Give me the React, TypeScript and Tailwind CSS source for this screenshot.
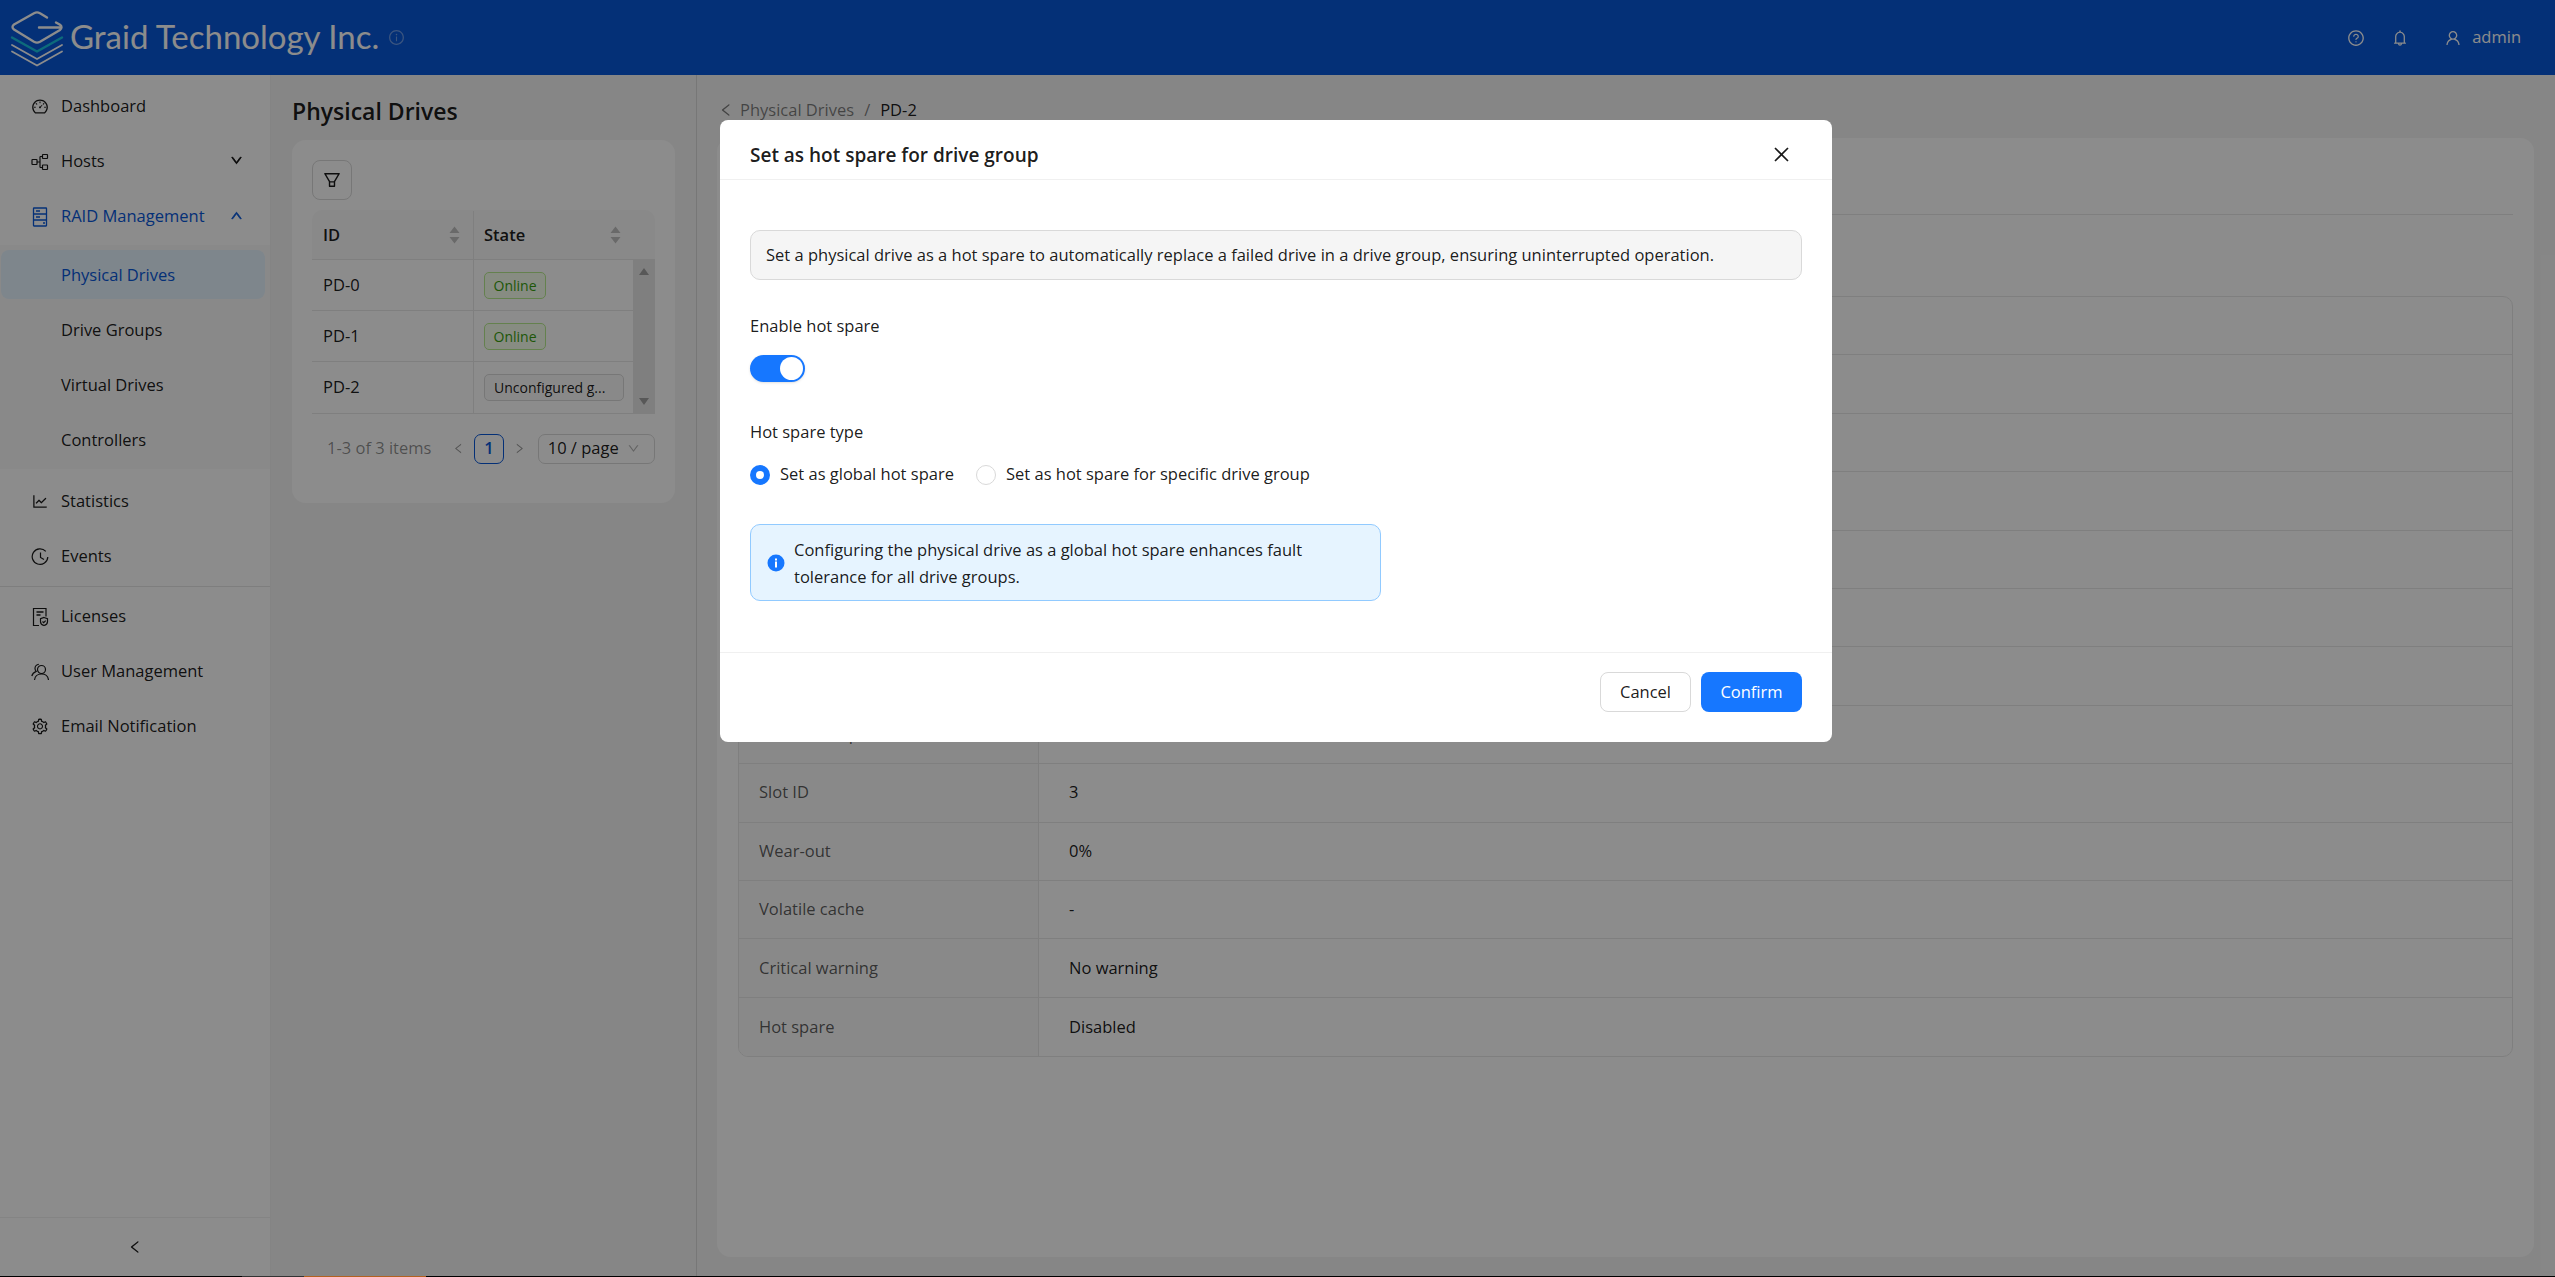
import React from "react";
import {
  AiOutlineDashboard,
  AiOutlineDown,
  AiOutlineUp,
  AiOutlineFilter,
  AiOutlineLeft,
  AiOutlineRight,
  AiOutlineQuestionCircle,
  AiOutlineBell,
  AiOutlineUser,
  AiOutlineClose,
  AiOutlineLineChart,
  AiOutlineSetting,
  AiOutlineInfoCircle,
} from "react-icons/ai";

const HostsIcon = () => (
  <svg width="18" height="18" viewBox="0 0 18 18" fill="none" stroke="currentColor" strokeWidth="1.2">
    <rect x="1" y="6.5" width="5" height="5" rx="0.5" />
    <rect x="11.5" y="1.5" width="5" height="4" rx="0.5" />
    <rect x="11.5" y="12" width="5" height="4.5" rx="0.5" />
    <path d="M6 9h3M9 3.5v11M9 3.5h2.5M9 14.5h2.5" />
  </svg>
);
const RaidIcon = () => (
  <svg width="18" height="20" viewBox="0 0 18 20" fill="none" stroke="currentColor" strokeWidth="1.3">
    <rect x="2.5" y="1" width="13" height="18" rx="0.5" />
    <path d="M2.5 7h13M2.5 13h13M5 4h4M5 10h4M12 16h2" />
  </svg>
);
const EventsIcon = () => (
  <svg width="18" height="18" viewBox="0 0 18 18" fill="none" stroke="currentColor" strokeWidth="1.2">
    <path d="M14.8 3.4A7.8 7.8 0 1 0 16.8 9" />
    <path d="M9.5 4.5V9.5l3.5 2" />
  </svg>
);
const LicenseIcon = () => (
  <svg width="18" height="20" viewBox="0 0 18 20" fill="none" stroke="currentColor" strokeWidth="1.2">
    <path d="M8 18.5H2.5V1.5h12.5v8" />
    <path d="M5.5 5h7M5.5 8h4" strokeWidth="1.4" />
    <path d="M13 10.5l3.5 1.2v3c0 2-1.6 3.2-3.5 3.8-1.9-.6-3.5-1.8-3.5-3.8v-3z" />
    <path d="M11.5 14.5l1.2 1.2 2-2" />
  </svg>
);
const UsersIcon = () => (
  <svg width="18" height="18" viewBox="0 0 18 18" fill="none" stroke="currentColor" strokeWidth="1.2">
    <circle cx="10.5" cy="6.5" r="4" />
    <path d="M3.5 17c.4-3.6 3.2-6 7-6s6.600 2.400 7 6" />
    <path d="M7.800 1.400A4 4 0 0 0 4 5.500c0 1.200.4 2.100 1.200 2.900C3 9.300 1.300 11 .8 13" />
  </svg>
);
const Logo = () => (
  <svg width="54" height="58" viewBox="10 5 54 58" fill="none" strokeLinecap="round" strokeLinejoin="round">
    <path
      d="M47 13.500L40 9.200Q37 7.600 34 9.200L14 20.500Q11 23 14 25.500L34 37.800Q37 39.400 40 37.800L60 26Q63 23 60 20.800L56 18.500M60 23.500L39 23.500"
      stroke="#fff"
      strokeWidth="2.400"
    />
    <path d="M12 33.500L37 47.500L62 33.500" stroke="#19c4e0" strokeWidth="2.400" />
    <path d="M12 41L37 55L62 41" stroke="#fff" strokeWidth="1.800" />
    <path d="M12 47.500L37 61.500L62 47.500" stroke="#fff" strokeWidth="1.800" />
  </svg>
);

const Sort = () => (
  <svg width="11" height="18" viewBox="0 0 11 18" className="text-[#bfbfbf]" fill="currentColor">
    <path d="M5.500 0.500L10.500 7H0.500z" />
    <path d="M5.500 17.500L10.500 11H0.500z" />
  </svg>
);

function NavItem({ icon, label, active, chevron }: { icon: React.ReactNode; label: string; active?: boolean; chevron?: "up" | "down" }) {
  return (
    <div className={`flex h-[55px] items-center pl-[31px] pr-[27px] text-[16.5px] ${active ? "text-[#0958d9]" : "text-black/90"}`}>
      <span className="flex w-[18px] justify-center">{icon}</span>
      <span className="ml-[12px] flex-1">{label}</span>
      {chevron === "down" && <AiOutlineDown size={13} className="mb-[3px] stroke-[60]" />}
      {chevron === "up" && <AiOutlineUp size={13} className="mb-[3px] stroke-[60]" />}
    </div>
  );
}

function SubItem({ label, active }: { label: string; active?: boolean }) {
  return (
    <div className={`ml-px flex h-[49px] w-[264px] items-center rounded-lg pl-[60px] pt-[2px] text-[16.5px] ${active ? "bg-[#e6f4ff] text-[#0958d9]" : "text-black/90"}`}>
      {label}
    </div>
  );
}

function Sidebar() {
  return (
    <aside className="flex w-[271px] shrink-0 flex-col border-r border-[#f0f0f0] bg-white">
      <div className="flex-1 pt-[4px]">
        <NavItem icon={<AiOutlineDashboard size={19} />} label="Dashboard" />
        <NavItem icon={<HostsIcon />} label="Hosts" chevron="down" />
        <NavItem icon={<RaidIcon />} label="RAID Management" active chevron="up" />
        <div className="mt-px flex flex-col gap-[6px] bg-black/[0.02] py-[5px]">
          <SubItem label="Physical Drives" active />
          <SubItem label="Drive Groups" />
          <SubItem label="Virtual Drives" />
          <SubItem label="Controllers" />
        </div>
        <div className="mt-[5px]">
          <NavItem icon={<AiOutlineLineChart size={19} />} label="Statistics" />
          <NavItem icon={<EventsIcon />} label="Events" />
        </div>
        <div className="mb-[2px] mt-[2px] h-px bg-[#e5e5e5]" />
        <NavItem icon={<LicenseIcon />} label="Licenses" />
        <NavItem icon={<UsersIcon />} label="User Management" />
        <NavItem icon={<AiOutlineSetting size={19} />} label="Email Notification" />
      </div>
      <div className="flex h-[59px] items-center justify-center border-t border-[#f0f0f0] text-black/90">
        <AiOutlineLeft size={16} />
      </div>
    </aside>
  );
}

function DriveRow({ id, tag, last }: { id: string; tag: React.ReactNode; last?: boolean }) {
  return (
    <div className={`flex h-[51px] ${last ? "" : "border-b border-[#e8e8e8]"}`}>
      <div className="flex w-[162px] items-center border-r border-[#e8e8e8] pl-[11px]">{id}</div>
      <div className="flex flex-1 items-center pl-[10px]">{tag}</div>
    </div>
  );
}

const OnlineTag = () => (
  <span className="flex h-[27px] w-[62px] items-center justify-center rounded-[5px] border border-[#b7eb8f] bg-[#f6ffed] text-[14px] text-[#389e0d]">
    Online
  </span>
);

function DrivesPanel() {
  return (
    <section className="w-[426px] shrink-0 border-r border-[#d9d9d9] pl-[21px] pr-[21px]">
      <h1 className="mt-[20px] h-[45px] whitespace-nowrap text-[23px] font-semibold leading-[32px] text-black/90">Physical Drives</h1>
      <div className="h-[363px] rounded-[14px] bg-white px-[20px] pt-[20px] text-[16.5px] text-black/90">
        <button className="flex h-[40px] w-[40px] items-center justify-center rounded-lg border border-[#d9d9d9] bg-white">
          <AiOutlineFilter size={20} />
        </button>
        <div className="mt-[10px] overflow-hidden rounded-t-[10px] border-b border-[#e8e8e8]">
          <div className="flex h-[50px] border-b border-[#e8e8e8] bg-[#fafafa] pt-px font-semibold">
            <div className="flex w-[162px] items-center justify-between border-r border-[#e8e8e8] pl-[11px] pr-[13px]">
              ID <Sort />
            </div>
            <div className="flex flex-1 items-center justify-between pl-[10px] pr-[34px]">
              State <Sort />
            </div>
          </div>
          <div className="flex">
            <div className="flex-1">
              <DriveRow id="PD-0" tag={<OnlineTag />} />
              <DriveRow id="PD-1" tag={<OnlineTag />} />
              <DriveRow
                id="PD-2"
                last
                tag={
                  <span className="flex h-[27px] w-[140px] items-center rounded-[5px] border border-[#d9d9d9] bg-[#fafafa] pl-[9px] text-[14px]">
                    Unconfigured g...
                  </span>
                }
              />
            </div>
            <div className="flex w-[22px] flex-col items-center justify-between bg-[#e8e8e8] py-[8px] text-[#a0a0a0]">
              <svg width="10" height="7" viewBox="0 0 10 7" fill="currentColor">
                <path d="M5 0L10 7H0z" />
              </svg>
              <svg width="10" height="7" viewBox="0 0 10 7" fill="currentColor">
                <path d="M5 7L10 0H0z" />
              </svg>
            </div>
          </div>
        </div>
        <div className="mt-[20px] flex h-[29px] items-center">
          <span className="ml-[15px] w-[108px] whitespace-nowrap text-black/45">1-3 of 3 items</span>
          <AiOutlineLeft size={13} className="ml-[18px] text-black/40" />
          <span className="ml-[9px] flex h-[30px] w-[30px] items-center justify-center rounded-[7px] border border-[#0958d9] font-semibold text-[#0958d9]">
            1
          </span>
          <AiOutlineRight size={13} className="ml-[9px] text-black/40" />
          <span className="ml-[12px] flex h-[30px] w-[118px] items-center justify-between rounded-[7px] border border-[#d9d9d9] pl-[9px] pr-[14px]">
            10 / page <AiOutlineDown size={13} className="text-black/30" />
          </span>
        </div>
      </div>
    </section>
  );
}

const rows: [string, string][] = [
  ["", ""],
  ["", ""],
  ["", ""],
  ["", ""],
  ["", ""],
  ["", ""],
  ["", ""],
  ["Maximum speed", ""],
  ["Slot ID", "3"],
  ["Wear-out", "0%"],
  ["Volatile cache", "-"],
  ["Critical warning", "No warning"],
  ["Hot spare", "Disabled"],
];

function DetailPanel() {
  return (
    <section className="flex min-w-0 flex-1 flex-col pl-[20px] pr-[21px]">
      <div className="flex h-[63px] shrink-0 items-center pt-[7px] text-[16.5px]">
        <AiOutlineLeft size={16} className="ml-[1px] text-black/50" />
        <span className="ml-[6px] text-black/50">Physical Drives</span>
        <span className="mx-[10px] text-black/50">/</span>
        <span className="text-black/90">PD-2</span>
      </div>
      <div className="flex h-[1119px] flex-col rounded-[14px] bg-white px-[21px]">
        <div className="h-[77px] shrink-0 border-b border-[#e8e8e8]" />
        <div className="mt-[81px] shrink-0 overflow-hidden rounded-[10px] border border-[#e8e8e8] text-[16.5px]">
          {rows.map(([k, v], i) => (
            <div key={i} className={`flex h-[58.4px] ${i < rows.length - 1 ? "border-b border-[#e8e8e8]" : ""}`}>
              <div className="flex w-[300px] items-center border-r border-[#e8e8e8] bg-[#fafafa] pl-[20px] text-black/65">{k}</div>
              <div className="flex flex-1 items-center pl-[30px] text-black/90">{v}</div>
            </div>
          ))}
        </div>
      </div>
    </section>
  );
}

function Modal() {
  return (
    <div className="flex h-[622px] w-[1112px] flex-col rounded-lg bg-white text-[16.5px] text-black/90">
      <div className="flex h-[60px] shrink-0 items-center justify-between border-b border-[#f0f0f0] pl-[30px] pr-[40px]">
        <h2 className="pt-[12px] text-[19px] font-semibold">Set as hot spare for drive group</h2>
        <AiOutlineClose size={21} className="mt-[9px]" />
      </div>
      <div className="flex-1 px-[30px] pt-[50px]">
        <div className="flex h-[50px] items-center rounded-[10px] border border-[#d9d9d9] bg-[#f5f5f5] pl-[15px]">
          Set a physical drive as a hot spare to automatically replace a failed drive in a drive group, ensuring uninterrupted operation.
        </div>
        <div className="mt-[32px] h-[27px] leading-[27px]">Enable hot spare</div>
        <div className="mt-[16px] flex h-[27px] w-[55px] items-center justify-end rounded-full bg-[#1677ff] pr-[2px] shadow-sm">
          <span className="h-[23px] w-[23px] rounded-full bg-white" />
        </div>
        <div className="mt-[36px] h-[27px] leading-[27px]">Hot spare type</div>
        <div className="mt-[16px] flex h-[27px] items-center">
          <span className="flex h-[20px] w-[20px] items-center justify-center rounded-full bg-[#1677ff]">
            <span className="h-[8px] w-[8px] rounded-full bg-white" />
          </span>
          <span className="ml-[10px] w-[196px]">Set as global hot spare</span>
          <span className="h-[20px] w-[20px] rounded-full border border-[#d9d9d9] bg-white" />
          <span className="ml-[10px]">Set as hot spare for specific drive group</span>
        </div>
        <div className="mt-[36px] flex h-[77px] w-[631px] items-center rounded-[10px] border border-[#91caff] bg-[#e6f4ff] pl-[16px] pr-[30px]">
          <svg width="18" height="18" viewBox="0 0 18 18" className="shrink-0">
            <circle cx="9" cy="9" r="8.500" fill="#1677ff" />
            <rect x="8" y="7.500" width="2" height="6" fill="#fff" />
            <rect x="8" y="4.500" width="2" height="2" fill="#fff" />
          </svg>
          <p className="ml-[9px] pt-[1px] leading-[27px]">Configuring the physical drive as a global hot spare enhances fault tolerance for all drive groups.</p>
        </div>
      </div>
      <div className="flex h-[90px] shrink-0 items-start justify-end gap-[10px] border-t border-[#f0f0f0] pr-[30px] pt-[19px]">
        <button className="h-[40px] w-[91px] rounded-lg border border-[#d9d9d9] bg-white">Cancel</button>
        <button className="h-[40px] w-[101px] rounded-lg bg-[#1677ff] text-white">Confirm</button>
      </div>
    </div>
  );
}

export default function App() {
  return (
    <div className="relative flex h-[1277px] w-full flex-col overflow-hidden bg-[#f5f5f5] font-['Open_Sans',sans-serif]">
      <header className="flex h-[75px] shrink-0 items-center bg-[#0958d9] text-white">
        <div className="ml-[10px] flex items-center">
          <Logo />
          <span className="mb-[2px] ml-[6px] whitespace-nowrap font-[Lato,sans-serif] text-[33px] leading-none">Graid Technology Inc.</span>
          <AiOutlineInfoCircle size={17} className="ml-[9px] opacity-40" />
        </div>
        <div className="ml-auto mr-[34px] flex items-center text-[16.5px]">
          <AiOutlineQuestionCircle size={18} />
          <AiOutlineBell size={18} className="ml-[26px]" />
          <AiOutlineUser size={18} className="ml-[35px]" />
          <span className="ml-[10px]">admin</span>
        </div>
      </header>
      <div className="flex min-h-0 flex-1">
        <Sidebar />
        <DrivesPanel />
        <DetailPanel />
      </div>
      <div className="relative z-20 flex h-px shrink-0 bg-black">
        <span className="ml-[242px] w-[62px] bg-[#333]" />
        <span className="w-[61px] bg-[#b4611f]" />
        <span className="w-[61px] bg-[#b4611f]" />
      </div>
      <div className="absolute inset-x-0 bottom-px top-0 z-10 bg-black/45 pl-[720px] pt-[120px]">
        <Modal />
      </div>
    </div>
  );
}
